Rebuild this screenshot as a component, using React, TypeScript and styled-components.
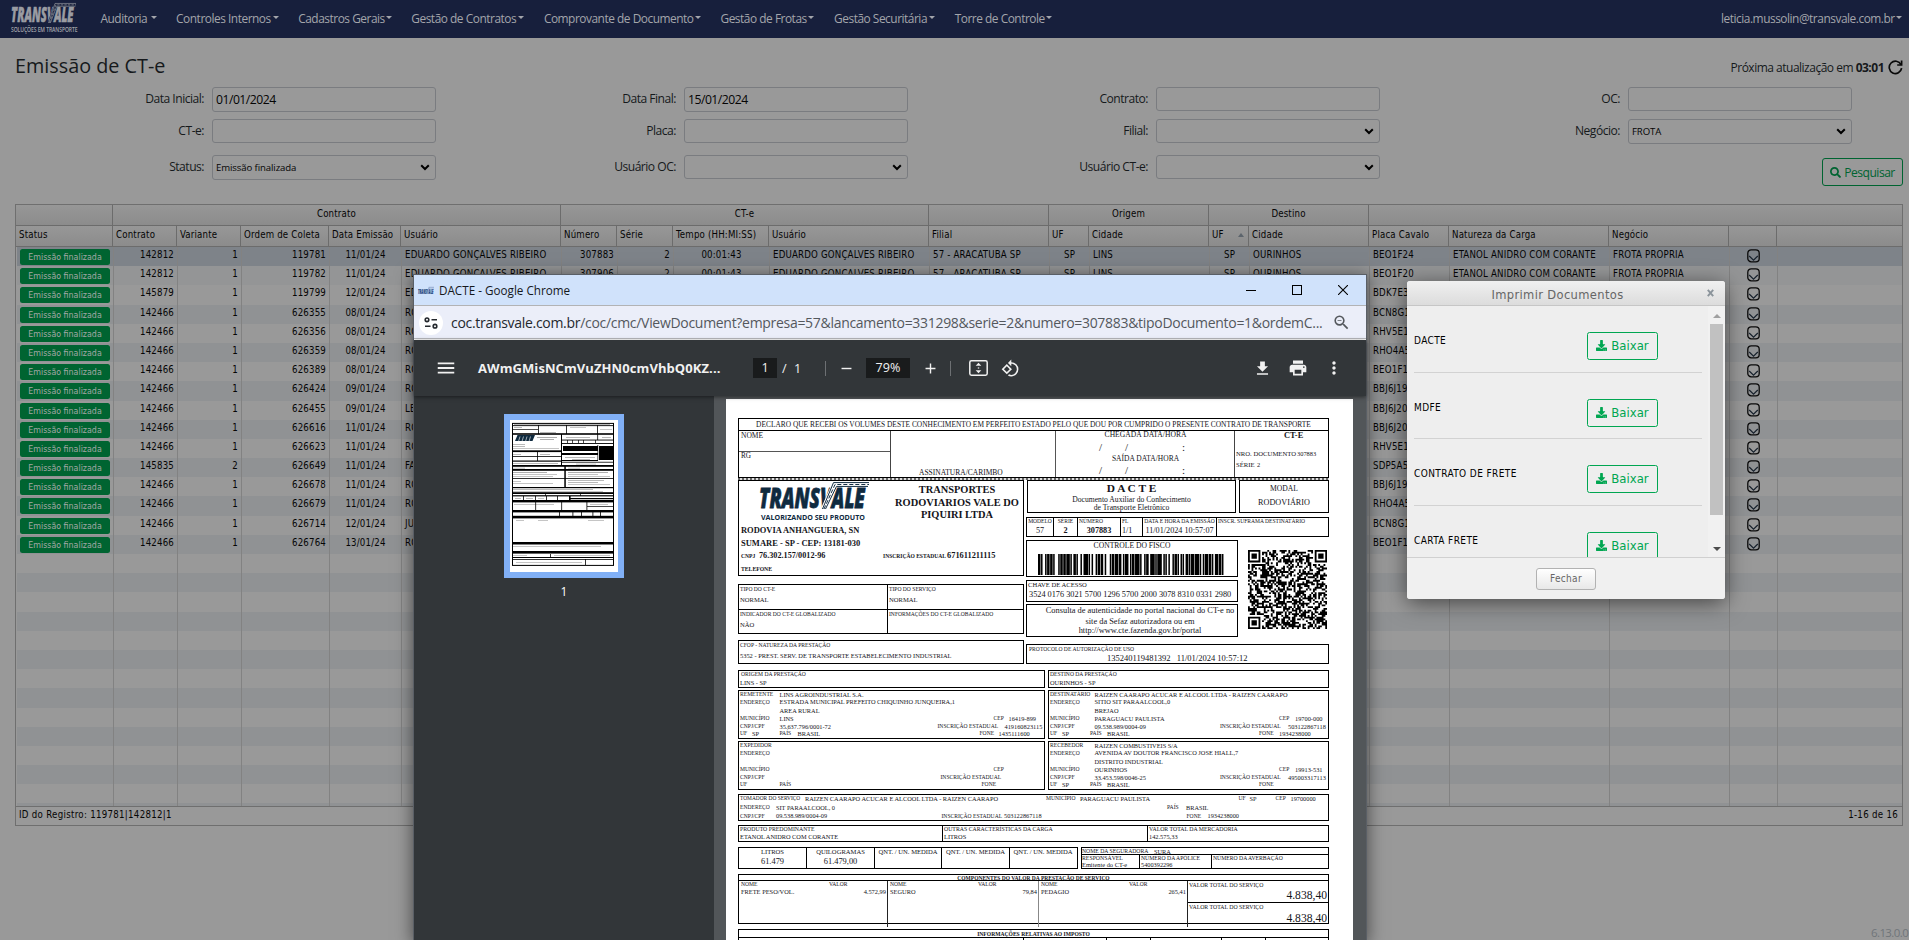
import React from 'react';
import styled, { createGlobalStyle, css } from 'styled-components';
import { FaDownload, FaSearch } from 'react-icons/fa';
import { MdRotate90DegreesCcw, MdFileDownload, MdPrint, MdMoreVert, MdMenu, MdAdd, MdRemove, MdZoomOut } from 'react-icons/md';

const UI = "'Open Sans', 'Noto Sans', sans-serif";
const GRID = "'DejaVu Sans Condensed', 'DejaVu Sans', sans-serif";
const SERIF = "'Liberation Serif', serif";

const GlobalStyle = createGlobalStyle`
  * { box-sizing: border-box; }
  html, body { margin: 0; padding: 0; background: #999; overflow: hidden; }
`;

const Page = styled.div`
  position: relative;
  width: 1909px;
  height: 940px;
  overflow: hidden;
  background: #999;
  color: #16191c;
  font-family: ${UI};
`;

/* ---------- navigation ---------- */

const Navbar = styled.header`
  display: flex;
  align-items: center;
  height: 38px;
  padding: 0 7px 0 11px;
  background: #171f3c;
  color: #a3a5ab;
`;

const NavLink = styled.a<{ $w: number }>`
  display: flex;
  align-items: center;
  justify-content: space-between;
  flex: 0 0 ${(p) => p.$w}px;
  margin-right: 19.6px;
  height: 38px;
  padding-bottom: 3px;
  font-size: 11.9px;
  letter-spacing: -0.47px;
  white-space: nowrap;
  &:last-child { margin: 0 0 0 auto; }
`;

const Caret = styled.i`
  width: 0;
  border: 3px solid transparent;
  border-top-color: currentColor;
  border-bottom: 0;
`;

const LogoLink = styled.a`
  flex: 0 0 89.5px;
  width: 89.5px;
  min-width: 0;
  height: 32px;
`;

const Artwork = styled.svg`
  display: block;
  overflow: visible;
`;

const navItems: [string, number][] = [
  ['Auditoria', 56], ['Controles Internos', 102.5], ['Cadastros Gerais', 93.5], ['Gestão de Contratos', 113],
  ['Comprovante de Documento', 157], ['Gestão de Frotas', 94], ['Gestão Securitária', 101], ['Torre de Controle', 97],
];

function Logo({ color, road, width, height }: { color: string; road: string; width: number; height: number }) {
  return (
    <Artwork width={width} height={height} viewBox="0 0 110 28" preserveAspectRatio="none">
      <text x="0" y="27" fontFamily="'Open Sans', sans-serif" fontStyle="italic" fontWeight="800" fontSize="30" fill={color}
        stroke={color} strokeWidth="0.8" textLength="106" lengthAdjust="spacingAndGlyphs">TRANSVALE</text>
      <path d="M65 28 L76 2 H110" fill="none" stroke={road} strokeWidth="6" />
      <path d="M66.5 28 L77.5 4.6 H109 M63.5 28 L74.5 0.6 H110" fill="none" stroke={color} strokeWidth="1" />
      <path d="M65 28 L76 2.6 H110" fill="none" stroke={color} strokeWidth="1" strokeDasharray="4 2" />
    </Artwork>
  );
}

const NavLogoCaption = styled.div`
  width: 89px;
  transform: scaleX(0.69);
  transform-origin: left;
  margin-top: 1px;
  font: 600 7.3px/10px ${UI};
  letter-spacing: -0.1px;
  white-space: nowrap;
`;

/* ---------- heading and filters ---------- */

const Heading = styled.div`
  display: flex;
  justify-content: space-between;
  height: 49px;
  padding: 12px 6px 0 15px;
`;

const Title = styled.h1`
  margin: 0;
  font: 500 19.8px/32px ${UI};
  letter-spacing: 0;
`;

const NextUpdate = styled.div`
  display: flex;
  align-items: center;
  gap: 4px;
  height: 35px;
  font-size: 12px;
  letter-spacing: -0.5px;
  b { font-weight: 700; }
`;

const Filters = styled.form`
  display: grid;
  grid-template-columns: repeat(4, 472px);
  grid-template-rows: 24px 24px 24px;
  row-gap: 8px;
  padding-left: 15px;
  height: 117px;
`;

const Field = styled.label<{ $drop?: boolean }>`
  display: grid;
  grid-template-columns: 189px 224px;
  column-gap: 8px;
  margin-top: ${(p) => (p.$drop ? 4 : 0)}px;
  height: 24px;
  line-height: 23px;
  font-size: 12.1px;
  letter-spacing: -0.5px;
  text-align: right;
`;

const Control = styled.span<{ $small?: boolean }>`
  display: flex;
  align-items: center;
  justify-content: space-between;
  padding: 0 5px 0 3px;
  border: 1px solid #7a7c80;
  border-radius: 3px;
  color: #050505;
  font-size: ${(p) => (p.$small ? 9.6 : 12.2)}px;
  letter-spacing: ${(p) => (p.$small ? -0.1 : -0.5)}px;
`;

const SearchBar = styled.div`
  display: flex;
  justify-content: flex-end;
  height: 0;
  padding-right: 6px;
`;

const SearchButton = styled.button`
  display: flex;
  align-items: center;
  justify-content: center;
  gap: 3px;
  width: 81px;
  height: 28px;
  margin-top: -46px;
  padding: 0;
  border: 1px solid #006431;
  border-radius: 3px;
  background: none;
  color: #006431;
  font: 12.1px ${UI};
  letter-spacing: -0.5px;
`;

const Chevron = () => (
  <svg width="10" height="7" viewBox="0 0 10 7"><path d="M1.2 1.2 L5 5 L8.8 1.2" fill="none" stroke="#000" strokeWidth="2" /></svg>
);

type FilterDef = { label: string; value?: string; select?: boolean };
const filters: FilterDef[] = [
  { label: 'Data Inicial:', value: '01/01/2024' }, { label: 'Data Final:', value: '15/01/2024' }, { label: 'Contrato:' }, { label: 'OC:' },
  { label: 'CT-e:' }, { label: 'Placa:' }, { label: 'Filial:', select: true }, { label: 'Negócio:', value: 'FROTA', select: true },
  { label: 'Status:', value: 'Emissão finalizada', select: true }, { label: 'Usuário OC:', select: true }, { label: 'Usuário CT-e:', select: true },
];

/* ---------- results grid ---------- */

const COLS = '97px 64px 64px 88px 72px 160px 56px 56px 96px 160px 120px 40px 120px 40px 120px 80px 160px 120px 48px 1fr';

const Table = styled.section`
  width: 1888px;
  height: 622px;
  margin-left: 15px;
  border: 1px solid #6f6f6f;
  font-family: ${GRID};
  font-stretch: condensed;
  font-size: 9.6px;
  letter-spacing: 0.18px;
  color: #050505;
  display: flex;
  flex-direction: column;
`;

const HeadRow = styled.div`
  display: grid;
  grid-template-columns: ${COLS};
  flex: 0 0 21px;
  background: linear-gradient(#979797, #8b8b8b);
`;

const GroupCell = styled.div<{ $span: number }>`
  grid-column: span ${(p) => p.$span};
  border-right: 1px solid #6c6c6c;
  border-bottom: 1px solid #6c6c6c;
  text-align: center;
  line-height: 18px;
  &:last-child { border-right: 0; }
`;

const HeadCell = styled.div`
  display: flex;
  justify-content: space-between;
  align-items: center;
  padding: 0 4px 3px 3px;
  border-right: 1px solid #6c6c6c;
  border-bottom: 1px solid #6c6c6c;
  white-space: nowrap;
  &:last-child { border-right: 0; }
`;

const SortArrow = styled.i`
  border: 3px solid transparent;
  border-bottom: 4px solid #5c646c;
  border-top: 0;
`;

const Body = styled.div`
  flex: 1;
  overflow: hidden;
  margin-left: 1px;
`;

const BodyRow = styled.div<{ $tone: string }>`
  display: grid;
  grid-template-columns: ${COLS};
  height: 19.2px;
  background: ${(p) => p.$tone};
`;

const BodyCell = styled.div<{ $align?: string }>`
  padding: 0 3px 0 3px;
  border-right: 1px solid #828282;
  line-height: 16.6px;
  text-align: ${(p) => p.$align || 'left'};
  white-space: nowrap;
  overflow: hidden;
  &:last-child { border-right: 0; }
`;

const Badge = styled.span`
  display: block;
  width: 90px;
  height: 16px;
  margin-top: 2px;
  border-radius: 2.5px;
  background: #006431;
  color: #a3a8a5;
  font: 500 8.8px/16px ${GRID};
  font-stretch: condensed;
  text-align: center;
  letter-spacing: 0;
`;

const ExpandMark = styled.svg`
  display: block;
  margin: 2px 0 0 14px;
`;

const TableFoot = styled.div`
  display: flex;
  justify-content: space-between;
  flex: 0 0 19px;
  padding: 0 4px 0 3px;
  border-top: 1px solid #6f6f6f;
  line-height: 16px;
  letter-spacing: 0.3px;
`;

const Version = styled.div`
  position: absolute;
  left: 1871px;
  bottom: 0;
  font-size: 11.5px;
  line-height: 14px;
  letter-spacing: -0.6px;
  white-space: nowrap;
  color: #70757a;
`;

const groups: [string, number][] = [['', 1], ['Contrato', 5], ['CT-e', 4], ['', 1], ['Origem', 2], ['Destino', 2], ['', 5]];
const heads = ['Status', 'Contrato', 'Variante', 'Ordem de Coleta', 'Data Emissão', 'Usuário', 'Número', 'Série', 'Tempo (HH:MI:SS)', 'Usuário',
  'Filial', 'UF', 'Cidade', 'UF', 'Cidade', 'Placa Cavalo', 'Natureza da Carga', 'Negócio', '', ''];
const aligns = ['left', 'right', 'right', 'right', 'center', 'left', 'right', 'right', 'center', 'left', 'left', 'center', 'left', 'center', 'left', 'left', 'left', 'left', 'center', 'left'];

const rest = (n: string, t: string, placa: string) =>
  [n, '2', t, 'EDUARDO GONÇALVES RIBEIRO', '57 - ARACATUBA SP', 'SP', 'LINS', 'SP', 'OURINHOS', placa, 'ETANOL ANIDRO COM CORANTE', 'FROTA PROPRIA'];
const short = (placa: string) => ['', '', '', '', '', '', '', '', '', placa, '', ''];

const records: string[][] = [
  ['142812', '1', '119781', '11/01/24', 'EDUARDO GONÇALVES RIBEIRO', ...rest('307883', '00:01:43', 'BEO1F24')],
  ['142812', '1', '119782', '11/01/24', 'EDUARDO GONÇALVES RIBEIRO', ...rest('307906', '00:01:43', 'BEO1F20')],
  ['145879', '1', '119799', '12/01/24', 'ED', ...short('BDK7E3')],
  ['142466', '1', '626355', '08/01/24', 'RO', ...short('BCN8G1')],
  ['142466', '1', '626356', '08/01/24', 'RO', ...short('RHV5E1')],
  ['142466', '1', '626359', '08/01/24', 'RO', ...short('RHO4A5')],
  ['142466', '1', '626389', '08/01/24', 'RO', ...short('BEO1F1')],
  ['142466', '1', '626424', '09/01/24', 'RO', ...short('BBJ6J19')],
  ['142466', '1', '626455', '09/01/24', 'LE', ...short('BBJ6J20')],
  ['142466', '1', '626616', '11/01/24', 'RO', ...short('BBJ6J20')],
  ['142466', '1', '626623', '11/01/24', 'RO', ...short('RHV5E1')],
  ['145835', '2', '626649', '11/01/24', 'FA', ...short('SDP5A5')],
  ['142466', '1', '626678', '11/01/24', 'RO', ...short('BBJ6J19')],
  ['142466', '1', '626679', '11/01/24', 'RO', ...short('RHO4A5')],
  ['142466', '1', '626714', '12/01/24', 'JU', ...short('BCN8G1')],
  ['142466', '1', '626764', '13/01/24', 'RO', ...short('BEO1F1')],
];

const ExpandIcon = () => (
  <ExpandMark width="13" height="14" viewBox="0 0 13 14">
    <rect x="0.8" y="0.8" width="11.4" height="12" rx="3.4" fill="none" stroke="#0a0a0a" strokeWidth="1.3" />
    <path d="M2.2 7 L6.5 11.2 L10.8 7" fill="none" stroke="#16202c" strokeWidth="1.1" />
  </ExpandMark>
);

const toneFor = (i: number) => (i === 0 ? '#7e8389' : i === 1 ? '#949596' : i % 2 ? '#909294' : '#999');

function ResultsTable() {
  return (
    <Table>
      <HeadRow>{groups.map(([g, n], i) => <GroupCell key={i} $span={n}>{g}</GroupCell>)}</HeadRow>
      <HeadRow>{heads.map((h, i) => <HeadCell key={i}>{h}{i === 13 && <SortArrow />}</HeadCell>)}</HeadRow>
      <Body>
        {Array.from({ length: 30 }, (_, i) => (
          <BodyRow key={i} $tone={toneFor(i)}>
            {aligns.map((a, c) => (
              <BodyCell key={c} $align={a}>
                {c === 0 && i < 16 && <Badge>Emissão finalizada</Badge>}
                {c > 0 && c < 18 && i < 16 && records[i][c - 1]}
                {c === 18 && i < 16 && <ExpandIcon />}
              </BodyCell>
            ))}
          </BodyRow>
        ))}
      </Body>
      <TableFoot><span>ID do Registro: 119781|142812|1</span><span>1-16 de 16</span></TableFoot>
    </Table>
  );
}

/* ---------- browser popup ---------- */

const Popup = styled.div`
  position: absolute;
  left: 414px;
  top: 275px;
  width: 952px;
  height: 665px;
  background: #525659;
  box-shadow: 0 0 0 1px #5a5f66, 0 3px 16px 2px rgba(0, 0, 0, 0.5);
  display: flex;
  flex-direction: column;
`;

const TitleBar = styled.div`
  display: flex;
  align-items: center;
  flex: 0 0 31px;
  padding-left: 4px;
  border-bottom: 1px solid #b2b3b5;
  background: #d0e2fb;
  color: #15181c;
  font-size: 11.7px;
  > span { margin-left: 5px; flex: 1; }
`;

const WindowButtons = styled.div`
  display: flex;
  gap: 36px;
  padding-right: 18px;
`;

const UrlBar = styled.div`
  display: flex;
  align-items: center;
  flex: 0 0 34px;
  padding: 0 15px 0 5px;
  border-bottom: 1px solid #fff;
  box-shadow: inset 0 -1px 0 #b7b8bd;
  background: #ebeef9;
  color: #54585d;
  font-size: 14px;
  > i, > svg { flex: none; }
  > span { flex: 0 0 880px; margin-left: 8px; letter-spacing: -0.3px; white-space: nowrap; }
  b { font-weight: 400; color: #24282d; }
  > svg { margin-left: 1px; }
`;

const SiteInfo = styled.i`
  display: flex;
  align-items: center;
  justify-content: center;
  width: 24px;
  height: 24px;
  border-radius: 50%;
  background: #fff;
`;

const PdfBar = styled.div`
  position: relative;
  display: flex;
  align-items: center;
  flex: 0 0 56px;
  padding-left: 21px;
  background: #323639;
  color: #f1f1f1;
  font-size: 12.6px;
  box-shadow: 0 1px 4px rgba(0, 0, 0, 0.5);
  svg { flex: none; }
`;

const FileName = styled.strong`
  flex: 0 0 275px;
  margin-left: 21px;
  font-size: 13px;
  font-weight: 700;
  letter-spacing: 0.08px;
`;

const DarkBox = styled.span<{ $w: number; $l?: number; $r?: number }>`
  width: ${(p) => p.$w}px;
  height: 20px;
  margin-left: ${(p) => p.$l || 0}px;
  margin-right: ${(p) => p.$r || 0}px;
  line-height: 20px;
  background: #191b1c;
  text-align: center;
`;

const Divider = styled.i<{ $l: number; $r: number }>`
  width: 1px;
  height: 15px;
  margin: 0 ${(p) => p.$r}px 0 ${(p) => p.$l}px;
  background: #6d7073;
`;

const PageCount = styled.span`
  width: 48px;
  padding-left: 5px;
  word-spacing: 4px;
`;

const PdfTools = styled.div`
  display: flex;
  align-items: center;
  margin-left: auto;
  padding-right: 22px;
  gap: 16px;
`;

const RotateSlot = styled.span`
  display: flex;
  margin-left: 13px;
`;

const Viewer = styled.div`
  display: flex;
  flex: 1;
  min-height: 0;
`;

const Thumbs = styled.aside`
  display: flex;
  flex-direction: column;
  align-items: center;
  flex: 0 0 300px;
  padding-top: 18px;
  background: #323639;
  color: #fff;
  font-size: 12px;
`;

const ThumbFrame = styled.div`
  width: 120px;
  height: 164px;
  margin-bottom: 5px;
  border: 6px solid #81b0f6;
  background: #fff;
`;

/* rectangles as x, y, width, height */
const thumbInk: number[][] = [
  [2, 5.2, 102, 0.9], [2, 9.3, 26, 0.7], [28, 5, 0.8, 9], [56, 5, 0.8, 9], [87, 5, 0.8, 9], [2, 13.2, 102, 1.6],
  [51, 14, 1, 31], [52, 19.6, 52, 0.9], [52, 23, 52, 0.9], [87.3, 14, 0.8, 6], [57, 20, 0.7, 3], [62, 20, 0.7, 3], [68, 20, 0.7, 3], [73, 20, 0.7, 3], [85, 20, 0.7, 3],
  [53, 26, 35, 5], [89, 26, 15, 14], [2, 30.3, 49, 1.8], [52, 33, 36, 2], [52, 40, 36, 1], [87.5, 25, 0.7, 15], [27, 32, 0.8, 9], [2, 36, 49, 0.8], [2, 40.5, 50, 1.2],
  [52, 41.8, 52, 0.8], [2, 45, 102, 1.8], [2, 49, 102, 1.8], [54.3, 46, 1.5, 21], [2, 58, 102, 0.8], [2, 67, 102, 1.2], [2, 72.2, 102, 1.8], [35, 74, 0.7, 2],
  [70, 74, 0.7, 2], [2, 75.2, 102, 1.2], [13, 76, 0.8, 5], [25, 76, 0.8, 5], [36, 76, 0.8, 5], [47, 76, 0.8, 5], [59, 76, 1.6, 5], [60, 78, 44, 1.2],
  [2, 80, 102, 2.4], [25.3, 82, 0.8, 8], [51.3, 82, 0.8, 8], [76.5, 82, 0.8, 8], [77, 86.2, 27, 0.7], [2, 90, 102, 2.4], [49, 92, 0.8, 5], [62.5, 92, 0.8, 5], [71, 92, 0.8, 5],
  [82.5, 92, 0.8, 5], [90, 92, 0.8, 5], [2, 95.8, 102, 2.6], [2, 122, 102, 2.5], [2, 131, 102, 2.6], [40, 134, 0.8, 4], [2, 137, 102, 1], [2, 139, 102, 0.8], [75.2, 139, 0.8, 6],
];
const thumbGrey: number[][] = [
  [4, 4, 96, 0.6], [4, 7, 8, 0.6], [60, 7, 16, 0.5], [90, 9, 12, 0.5], [30, 12, 16, 0.6], [27, 17, 20, 0.7], [30, 19, 14, 0.7], [56, 17, 24, 0.6], [92, 17, 9, 0.6],
  [3, 24, 12, 0.6], [3, 26, 12, 0.6], [3, 28, 46, 0.5], [3, 34, 8, 0.6], [30, 34, 10, 0.6], [55, 37, 30, 0.6], [62, 39, 18, 0.6], [3, 43.4, 45, 0.6], [66, 43.8, 20, 0.5],
  [3, 47.8, 12, 0.6], [58, 47.8, 12, 0.6], [3, 52, 34, 0.7], [3, 54, 44, 0.5], [3, 56, 40, 0.5], [58, 52, 40, 0.7], [58, 54, 30, 0.5], [58, 56, 42, 0.5], [3, 61, 8, 0.5],
  [3, 63, 40, 0.5], [58, 60, 36, 0.6], [58, 62, 30, 0.6], [58, 64.5, 42, 0.5], [3, 69, 80, 0.6], [3, 71, 90, 0.5], [5, 78, 6, 0.6], [16, 78, 7, 0.6], [28, 78, 6, 0.5],
  [4, 84, 40, 0.5], [80, 84, 18, 0.5], [6, 100, 8, 0.5], [28, 100, 10, 0.5], [78, 100, 16, 0.5], [3, 126, 88, 0.5], [3, 135.5, 14, 0.5], [44, 135.5, 56, 0.5], [6, 142, 66, 0.5],
];

function Thumbnail() {
  return (
    <Artwork width="108" height="152" viewBox="0 0 108 152">
      <rect x="2.5" y="3.4" width="101" height="142" fill="none" stroke="#000" />
      {thumbGrey.map(([x, y, w, h], i) => <rect key={i} x={x} y={y} width={w} height={h} fill="#8a8a8a" />)}
      {thumbInk.map(([x, y, w, h], i) => <rect key={i} x={x} y={y} width={w} height={h} />)}
      <path d="M5 21L7.5 15H25L22.5 21Z" fill="#0f2a3f" />
      <path d="M8.5 21.5L10 16.5M12 21.5L13.5 16.5M15.5 21.5L17 16.5M19 21.5L20.5 16.5" stroke="#fff" strokeWidth="0.6" />
    </Artwork>
  );
}

/* ---------- DACTE document ---------- */

const Sheet = styled.article`
  width: 627px;
  margin-left: 12px;
  margin-top: 3px;
  padding: 19px 24px 0 12px;
  overflow: hidden;
  background: #fff;
  color: #14141a;
  font-family: ${SERIF};
`;

const Box = styled.div<{ $h: number; $w?: number; $mt?: number; $ml?: number; $dir?: string }>`
  display: flex;
  flex-direction: ${(p) => p.$dir || 'column'};
  flex: none;
  ${(p) => p.$w && css`width: ${p.$w}px;`}
  height: ${(p) => p.$h}px;
  margin-top: ${(p) => p.$mt || 0}px;
  margin-left: ${(p) => p.$ml || 0}px;
  border: 1px solid #000;
`;

const Strip = styled.div`
  display: flex;
  align-items: flex-start;
`;

const FillStrip = styled.div`
  display: flex;
  flex: 1;
  align-items: stretch;
`;

const HalfStrip = styled.div`
  display: flex;
  height: 24px;
  & + & { border-top: 1px solid #000; }
`;

const Stack = styled.div<{ $w: number; $ml?: number }>`
  flex: 0 0 ${(p) => p.$w}px;
  width: ${(p) => p.$w}px;
  margin-left: ${(p) => p.$ml || 0}px;
`;

const Cell = styled.div<{ $w?: number; $line?: string; $pt?: number }>`
  display: flex;
  flex-direction: column;
  flex: ${(p) => (p.$w ? `0 0 ${p.$w}px` : '1')};
  min-width: 0;
  padding-top: ${(p) => p.$pt || 0}px;
  border-right: 1px solid ${(p) => p.$line || '#000'};
  &:last-child { border-right: 0; }
`;

const ReceiptStrip = styled(Strip)`
  height: 46px;
  align-items: stretch;
`;

const Line = styled.div<{ $h: number; $pl?: number; $rule?: string }>`
  display: flex;
  flex: 0 0 ${(p) => p.$h}px;
  height: ${(p) => p.$h}px;
  line-height: ${(p) => p.$h}px;
  padding-left: ${(p) => p.$pl || 0}px;
  ${(p) => p.$rule && css`border-bottom: 1px solid ${p.$rule};`}
`;

const Slot = styled.span<{ $w?: number; $s: number; $b?: boolean; $a?: string }>`
  flex: ${(p) => (p.$w ? `0 0 ${p.$w}px` : '1 0 0')};
  font-size: ${(p) => p.$s}px;
  font-weight: ${(p) => (p.$b ? 700 : 400)};
  text-align: ${(p) => p.$a || 'left'};
  white-space: pre;
`;

const Perforation = styled.div`
  width: 591px;
  height: 2px;
  background: repeating-linear-gradient(90deg, #666 0 2px, #ddd 2px 4px);
`;

const LogoArea = styled.div`
  padding: 1px 0 0 20px;
`;

const Caption = styled.div`
  margin: 4px 0 0 22px;
  height: 9px;
  font: 700 7.1px/9px ${UI};
  color: #0f2a3f;
  white-space: nowrap;
`;

type Item = [text: string, width: number, size: number, bold?: boolean, align?: string];
const Items = ({ h, pl = 0, of, rule }: { h: number; pl?: number; of: Item[]; rule?: string }) => (
  <Line $h={h} $pl={pl} $rule={rule}>
    {of.map(([t, w, s, b, a], i) => <Slot key={i} $w={w} $s={s} $b={b} $a={a}>{t}</Slot>)}
  </Line>
);

const BarcodeArt = styled.svg`
  display: block;
  flex: none;
  margin: 3px 0 0 11px;
`;

const QrArt = styled.svg`
  display: block;
  flex: none;
  margin: 13px 0 0 10px;
`;

const bars = '2113112121141121213112211312411213112122141121312211321121411311224111421112131121121112211131411211312112312114';

const Barcode = () => {
  let x = 0;
  const total = bars.split('').reduce((s, c) => s + Number(c), 0);
  return (
    <BarcodeArt width="189" height="21" viewBox={`0 0 ${total} 21`} preserveAspectRatio="none">
      {bars.split('').map((c, i) => {
        const w = Number(c);
        const r = i % 2 === 0 ? <rect key={i} x={x} width={w + 0.5} height="21" /> : null;
        x += w;
        return r;
      })}
    </BarcodeArt>
  );
};

const N = 45;
const inFinder = (x: number, y: number) => {
  const fx = x < 8 ? x : x >= N - 8 ? N - 1 - x : -1;
  const fy = y < 8 ? y : y >= N - 8 ? N - 1 - y : -1;
  if (fx < 0 || fy < 0 || (x >= N - 8 && y >= N - 8)) return null;
  if (fx === 7 || fy === 7) return false;
  const d = Math.max(Math.abs(fx - 3), Math.abs(fy - 3));
  return d === 3 || d <= 1;
};
const QrCode = () => {
  let seed = 20240111;
  let d = '';
  for (let y = 0; y < N; y++) {
    for (let x = 0; x < N; x++) {
      seed = (seed * 1103515245 + 12345) % 2147483648;
      const f = inFinder(x, y);
      if (f === null ? (seed >> 12) % 100 < 54 : f) d += `M${x} ${y}h1.05v1.05h-1.05z`;
    }
  }
  return <QrArt width="79" height="79" viewBox="0 0 45 45"><path d={d} /></QrArt>;
};

type Party = {
  role: string; name: string; addr: string; area: string; city: string; cep: string; doc: string; ie: string; uf: string; country: string; phone: string;
};
/* columns: value, cep label/value, inscription label/value, phone label/value, uf value, country label/value */
const leftCols = [39.5, 253.5, 268.5, 197.5, 264.5, 239.5, 258.5, 12, 39.5, 57.5];
const rightCols = [44.5, 229, 245, 170, 238, 209, 229, 12, 40, 57];
const blankCols = [39.5, 253.5, 268.5, 200.5, 264.5, 241.5, 258.5, 12, 39.5, 57.5];

function PartyBox({ p, c, w, ml, h, mt }: { p: Party; c: number[]; w: number; ml?: number; h: number; mt: number }) {
  const L = 5.6;
  const V = 6.35;
  return (
    <Box $w={w} $h={h} $ml={ml} $mt={mt}>
      <Items h={7.4} pl={1} of={[[p.role, c[0], L], [p.name, 100, V]]} />
      <Items h={8.8} pl={1} of={[['ENDEREÇO', c[0], L], [p.addr, 100, V]]} />
      <Items h={7.6} pl={1} of={[['', c[0], L], [p.area, 100, V]]} />
      <Items h={7.9} pl={1} of={[['MUNICÍPIO', c[0], L], [p.city, c[1] - c[0], V], ['CEP', c[2] - c[1], L], [p.cep, 30, V]]} />
      <Items h={7.8} pl={1} of={[['CNPJ/CPF', c[0], L], [p.doc, c[3] - c[0], V], ['INSCRIÇÃO ESTADUAL', c[4] - c[3], L], [p.ie, 30, V]]} />
      <Items h={7.6} pl={1} of={[['UF', c[7], L], [p.uf, c[8] - c[7], V], ['PAÍS', c[9] - c[8], L], [p.country, c[5] - c[9], V], ['FONE', c[6] - c[5], L], [p.phone, 30, V]]} />
    </Box>
  );
}

const remetente: Party = { role: 'REMETENTE', name: 'LINS AGROINDUSTRIAL S.A.', addr: 'ESTRADA MUNICIPAL PREFEITO CHIQUINHO JUNQUEIRA,1', area: 'AREA RURAL', city: 'LINS', cep: '16419-899', doc: '35.637.796/0001-72', ie: '419160823115', uf: 'SP', country: 'BRASIL', phone: '1435111600' };
const destinatario: Party = { role: 'DESTINATÁRIO', name: 'RAIZEN CAARAPO ACUCAR E ALCOOL LTDA - RAIZEN CAARAPO', addr: 'SITIO SIT PARAALCOOL,0', area: 'BREJAO', city: 'PARAGUACU PAULISTA', cep: '19700-000', doc: '09.538.989/0004-09', ie: '503122867118', uf: 'SP', country: 'BRASIL', phone: '1934238000' };
const expedidor: Party = { role: 'EXPEDIDOR', name: '', addr: '', area: '', city: '', cep: '', doc: '', ie: '', uf: '', country: '', phone: '' };
const recebedor: Party = { role: 'RECEBEDOR', name: 'RAIZEN COMBUSTIVEIS S/A', addr: 'AVENIDA AV DOUTOR FRANCISCO JOSE HIALL,7', area: 'DISTRITO INDUSTRIAL', city: 'OURINHOS', cep: '19913-531', doc: '33.453.598/0046-25', ie: '495003317113', uf: 'SP', country: 'BRASIL', phone: '' };

function Dacte() {
  return (
    <Sheet>
      <Box $h={60} $w={591}>
        <Items h={12} rule="#000" of={[['DECLARO QUE RECEBI OS VOLUMES DESTE CONHECIMENTO EM PERFEITO ESTADO PELO QUE DOU POR CUMPRIDO O PRESENTE CONTRATO DE TRANSPORTE', 589, 7.42, false, 'center']]} />
        <ReceiptStrip>
          <Cell $w={152} $line="#444">
            <Items h={10} pl={2} of={[['NOME', 60, 7.5]]} />
            <Line $h={11} $rule="#555" />
            <Items h={8} pl={2} of={[['RG', 60, 7.2]]} />
          </Cell>
          <Cell $w={165} $line="#555" $pt={38}>
            <Items h={8} pl={28} of={[['ASSINATURA/CARIMBO', 100, 7.5]]} />
          </Cell>
          <Cell $w={179} $line="#444">
            <Items h={8.5} of={[['CHEGADA DATA/HORA', 179, 7.6, false, 'center']]} />
            <Items h={14} pl={43} of={[['/', 26, 11], ['/', 57, 11], [':', 10, 11]]} />
            <Items h={9} of={[['SAÍDA DATA/HORA', 179, 7.5, false, 'center']]} />
            <Items h={14} pl={43} of={[['/', 26, 11], ['/', 57, 11], [':', 10, 11]]} />
          </Cell>
          <Cell>
            <Items h={9} pl={49} of={[['CT-E', 40, 8.4, true]]} />
            <Line $h={9} />
            <Items h={9} pl={1} of={[['NRO. DOCUMENTO', 61, 6.7], ['307883', 30, 6.4]]} />
            <Items h={13} pl={1} of={[['SÉRIE', 21, 6.7], ['2', 30, 6.4]]} />
          </Cell>
        </ReceiptStrip>
      </Box>
      <Perforation />
      <Strip>
        <Stack $w={286}>
          <Box $h={96} $w={286}>
            <Strip>
              <Stack $w={148}>
                <LogoArea><Logo width={110} height={27} color="#0f2a3f" road="#fff" /></LogoArea>
                <Caption>VALORIZANDO SEU PRODUTO</Caption>
                <Line $h={2} />
              </Stack>
              <Stack $w={136}>
                <Items h={17} of={[['TRANSPORTES', 140, 10.4, true, 'center']]} />
                <Items h={10.5} of={[['RODOVIARIOS VALE DO', 140, 10.4, true, 'center']]} />
                <Items h={12} of={[['PIQUIRI LTDA', 140, 10.4, true, 'center']]} />
              </Stack>
            </Strip>
            <Items h={13} pl={2} of={[['RODOVIA ANHANGUERA, SN', 200, 8.45, true]]} />
            <Items h={13} pl={2} of={[['SUMARE - SP - CEP: 13181-030', 200, 8.5, true]]} />
            <Items h={12.5} pl={2} of={[['CNPJ', 18, 5.6, true], ['76.302.157/0012-96', 124, 8.2, true], ['INSCRIÇÃO ESTADUAL', 64, 5.55, true], ['671611211115', 60, 8.4, true]]} />
            <Items h={12.5} pl={2} of={[['TELEFONE', 60, 5.7, true]]} />
          </Box>
          <Box $h={50} $w={286} $mt={8}>
            {[['TIPO DO CT-E', 'TIPO DO SERVIÇO', 'NORMAL', 'NORMAL'], ['INDICADOR DO CT-E GLOBALIZADO', 'INFORMAÇÕES DO CT-E GLOBALIZADO', 'NÃO', '']].map((r) => (
              <HalfStrip key={r[0]}>
                {[0, 1].map((k) => (
                  <Cell key={k} $w={k ? undefined : 149}>
                    <Items h={8} pl={1} of={[[r[k], 100, 5.6]]} />
                    <Items h={14} pl={1} of={[[r[k + 2], 100, 6.6]]} />
                  </Cell>
                ))}
              </HalfStrip>
            ))}
          </Box>
          <Box $h={24} $w={286} $mt={6}>
            <Items h={8} pl={1} of={[['CFOP - NATUREZA DA PRESTAÇÃO', 200, 5.6]]} />
            <Items h={13} pl={1} of={[['5352 - PREST. SERV. DE TRANSPORTE ESTABELECIMENTO INDUSTRIAL', 280, 6.42]]} />
          </Box>
        </Stack>
        <Stack $w={305}>
          <Strip>
            <Box $h={33} $w={209} $ml={3}>
              <Items h={14} of={[['D A C T E', 207, 11.4, true, 'center']]} />
              <Items h={9} of={[['Documento Auxiliar do Conhecimento', 207, 7.65, false, 'center']]} />
              <Items h={8} of={[['de Transporte Eletrônico', 207, 7.65, false, 'center']]} />
            </Box>
            <Box $h={33} $w={90} $ml={3}>
              <Items h={15} of={[['MODAL', 88, 7.6, false, 'center']]} />
              <Items h={14} of={[['RODOVIÁRIO', 88, 8.2, false, 'center']]} />
            </Box>
          </Strip>
          <Box $h={20} $w={303} $ml={2} $mt={4} $dir="row">
            {([['MODELO', '57', 27, 'center', false], ['SÉRIE', '2', 24, 'center', true], ['NÚMERO', '307883', 43, 'center', true], ['FL', '1/1', 22, 'left', false],
              ['DATA E HORA DA EMISSÃO', '11/01/2024 10:57:07', 74, 'center', false], ['INSCR. SUFRAMA DESTINATÁRIO', '', 111, 'left', false]] as [string, string, number, string, boolean][]).map(([l, v, w, a, b], i) => (
              <Cell key={l} $w={w}>
                <Items h={7.5} pl={i >= 2 ? 1 : 0} of={[[l, i >= 2 ? w - 3 : w - 1, 5.55, false, i === 2 ? 'left' : a]]} />
                <Items h={10} pl={i === 3 ? 1 : 0} of={[[v, w - 1, 8.2, b, a]]} />
              </Cell>
            ))}
          </Box>
          <Strip>
            <Stack $w={212} $ml={2}>
              <Box $h={37} $w={212} $mt={3}>
                <Items h={10} of={[['CONTROLE DO FISCO', 210, 7.6, false, 'center']]} />
                <Barcode />
              </Box>
              <Box $h={22} $w={212} $mt={3}>
                <Items h={8} pl={1} of={[['CHAVE DE ACESSO', 100, 6.6]]} />
                <Items h={12} pl={2} of={[['3524 0176 3021 5700 1296 5700 2000 3078 8310 0331 2980', 207, 8.25]]} />
              </Box>
              <Box $h={33} $w={212} $mt={2}>
                <Items h={12.5} of={[['Consulta de autenticidade no portal nacional do CT-e no', 226, 8.4, false, 'center']]} />
                <Items h={8.5} of={[['site da Sefaz autorizadora ou em', 226, 8.4, false, 'center']]} />
                <Items h={10.5} of={[['http://www.cte.fazenda.gov.br/portal', 226, 8.4, false, 'center']]} />
              </Box>
            </Stack>
            <QrCode />
          </Strip>
          <Box $h={20} $w={303} $ml={2} $mt={7}>
            <Items h={8} pl={2} of={[['PROTOCOLO DE AUTORIZAÇÃO DE USO', 200, 5.6]]} />
            <Items h={10} pl={80} of={[['135240119481392   11/01/2024 10:57:12', 200, 8.5]]} />
          </Box>
        </Stack>
      </Strip>
      <Strip>
        <Box $h={18} $w={307} $mt={6}>
          <Items h={7} pl={2} of={[['ORIGEM DA PRESTAÇÃO', 100, 5.6]]} />
          <Items h={9} pl={1} of={[['LINS - SP', 100, 6.4]]} />
        </Box>
        <Box $h={18} $w={281} $mt={6} $ml={3}>
          <Items h={7} pl={1} of={[['DESTINO DA PRESTAÇÃO', 100, 5.6]]} />
          <Items h={9} pl={1} of={[['OURINHOS - SP', 100, 6.4]]} />
        </Box>
      </Strip>
      <Strip>
        <PartyBox p={remetente} c={leftCols} w={307} h={49} mt={2} />
        <PartyBox p={destinatario} c={rightCols} w={281} ml={3} h={49} mt={2} />
      </Strip>
      <Strip>
        <PartyBox p={expedidor} c={blankCols} w={307} h={49} mt={2} />
        <PartyBox p={recebedor} c={rightCols} w={281} ml={3} h={49} mt={2} />
      </Strip>
      <Box $h={27} $w={591} $mt={4}>
        <Items h={7.5} pl={1} of={[['TOMADOR DO SERVIÇO', 65, 5.4], ['RAIZEN CAARAPO ACUCAR E ALCOOL LTDA - RAIZEN CAARAPO', 241, 6.35], ['MUNICÍPIO', 34, 5.6], ['PARAGUACU PAULISTA', 158.5, 6.35], ['UF', 11, 5.6], ['SP', 26, 6.3], ['CEP', 15, 5.6], ['19700000', 30, 6.3]]} />
        <Items h={9} pl={1} of={[['ENDEREÇO', 36, 5.6], ['SIT PARAALCOOL, 0', 391, 6.3], ['PAÍS', 19, 5.6], ['BRASIL', 30, 6.3]]} />
        <Items h={8} pl={1} of={[['CNPJ/CPF', 36, 5.6], ['09.538.989/0004-09', 165.5, 6.3], ['INSCRIÇÃO ESTADUAL', 62.5, 5.6], ['503122867118', 182.5, 6.3], ['FONE', 21, 5.6], ['1934238000', 30, 6.3]]} />
      </Box>
      <Box $h={17} $w={591} $mt={4} $dir="row">
        {([['PRODUTO PREDOMINANTE', 'ETANOL ANIDRO COM CORANTE', 204], ['OUTRAS CARACTERÍSTICAS DA CARGA', 'LITROS', 205], ['VALOR TOTAL DA MERCADORIA', '142.575,33', 180]] as [string, string, number][]).map(([l, v, w]) => (
          <Cell key={l} $w={w}>
            <Items h={7} pl={1} of={[[l, 100, 5.8]]} />
            <Items h={8} pl={1} of={[[v, 100, 6.35]]} />
          </Cell>
        ))}
      </Box>
      <Strip>
        <Box $h={22} $w={340} $mt={5} $dir="row">
          {([['LITROS', '61.479', 68], ['QUILOGRAMAS', '61.479,00', 68], ['QNT. / UN. MEDIDA', '', 67], ['QNT. / UN. MEDIDA', '', 68], ['QNT. / UN. MEDIDA', '', 67]] as [string, string, number][]).map(([l, v, w], i) => (
            <Cell key={i} $w={w}>
              <Items h={7.5} of={[[l, w - 1, 6.6, false, 'center']]} />
              <Items h={12} of={[[v, w - 1, 8.4, false, 'center']]} />
            </Cell>
          ))}
        </Box>
        <Box $h={22} $w={248} $mt={5} $ml={3}>
          <Items h={7} rule="#000" of={[['NOME DA SEGURADORA', 72, 5.7], ['SURA', 60, 6.3]]} />
          <Strip>
            <Cell $w={58}><Items h={6.5} of={[['RESPONSÁVEL', 50, 5.8]]} /><Items h={6.5} of={[['Emitente do CT-e', 50, 6.4]]} /></Cell>
            <Cell $w={72}><Items h={6.5} pl={1} of={[['NÚMERO DA APÓLICE', 50, 5.7]]} /><Items h={6.5} pl={1} of={[['5400392296', 50, 6.3]]} /></Cell>
            <Cell $w={116}><Items h={6.5} pl={1} of={[['NÚMERO DA AVERBAÇÃO', 50, 5.7]]} /></Cell>
          </Strip>
        </Box>
      </Strip>
      <Box $h={50} $w={591} $mt={5}>
        <Items h={6} rule="#000" of={[['COMPONENTES DO VALOR DA PRESTAÇÃO DE SERVIÇO', 589, 5.5, true, 'center']]} />
        <FillStrip>
          {([['FRETE PESO/VOL.', '4.572,99', 149], ['SEGURO', '79,84', 151], ['PEDAGIO', '265,41', 149]] as [string, string, number][]).map(([l, v, w], i) => (
            <Cell key={l} $w={w} $line={i === 1 ? '#888' : '#222'}>
              <Items h={6} pl={2} of={[['NOME', 88, 5.6], ['VALOR', 30, 5.6]]} />
              <Items h={9} pl={2} of={[[l, 70, 6.4], [v, w - 74, 6.4, false, 'right']]} />
            </Cell>
          ))}
          <Cell>
            <Items h={8} pl={1} of={[['VALOR TOTAL DO SERVIÇO', 100, 5.8]]} />
            <Items h={14} rule="#000" of={[['4.838,40', 139, 11.6, false, 'right']]} />
            <Items h={8} pl={1} of={[['VALOR TOTAL DO SERVIÇO', 100, 5.8]]} />
            <Items h={16} of={[['4.838,40', 139, 11.6, false, 'right']]} />
          </Cell>
        </FillStrip>
      </Box>
      <Box $h={30} $w={591} $mt={5}>
        <Items h={8} rule="#000" of={[['INFORMAÇÕES RELATIVAS AO IMPOSTO', 589, 5.6, true, 'center']]} />
        <FillStrip>
          <Cell $w={285} /><Cell $w={83} /><Cell $w={44} /><Cell $w={71} /><Cell $w={44} /><Cell />
        </FillStrip>
      </Box>
    </Sheet>
  );
}

function PopupWindow() {
  return (
    <Popup>
      <TitleBar>
        <Logo width={16} height={7} color="#24467e" road="#d0e2fb" />
        <span>DACTE - Google Chrome</span>
        <WindowButtons>
          <svg width="10" height="10"><path d="M0 5.5H10" stroke="#000" /></svg>
          <svg width="10" height="10"><rect x="0.5" y="0.5" width="9" height="9" fill="none" stroke="#000" /></svg>
          <svg width="10" height="10"><path d="M0 0L10 10M10 0L0 10" stroke="#000" strokeWidth="1.1" /></svg>
        </WindowButtons>
      </TitleBar>
      <UrlBar>
        <SiteInfo>
          <svg width="14" height="12" viewBox="0 0 14 12" fill="none" stroke="#24282d" strokeWidth="1.6">
            <circle cx="3" cy="2.8" r="1.8" /><path d="M7.5 2.8H13M1 9.2H6.5" /><circle cx="11" cy="9.2" r="1.8" />
          </svg>
        </SiteInfo>
        <span><b>coc.transvale.com.br</b>/coc/cmc/ViewDocument?empresa=57&amp;lancamento=331298&amp;serie=2&amp;numero=307883&amp;tipoDocumento=1&amp;ordemC...</span>
        <MdZoomOut size={19} />
      </UrlBar>
      <PdfBar>
        <MdMenu size={22} />
        <FileName>AWmGMisNCmVuZHN0cmVhbQ0KZ...</FileName>
        <DarkBox $w={24}>1</DarkBox>
        <PageCount>/ 1</PageCount>
        <Divider $l={0} $r={12} />
        <MdRemove size={17} />
        <DarkBox $w={44} $l={11} $r={12}>79%</DarkBox>
        <MdAdd size={17} />
        <Divider $l={11} $r={18} />
        <svg width="19" height="16" viewBox="0 0 19 16" fill="none" stroke="#f1f1f1">
          <rect x="0.8" y="0.8" width="17.4" height="14.4" rx="1.6" strokeWidth="1.5" />
          <path d="M9.5 2.8l2.8 3h-5.6zM9.5 13.2l2.8-3h-5.6z" fill="#f1f1f1" stroke="none" /><path d="M8.8 8h1.4" strokeWidth="1.2" />
        </svg>
        <RotateSlot><MdRotate90DegreesCcw size={19} /></RotateSlot>
        <PdfTools><MdFileDownload size={19} /><MdPrint size={20} /><MdMoreVert size={20} /></PdfTools>
      </PdfBar>
      <Viewer>
        <Thumbs><ThumbFrame><Thumbnail /></ThumbFrame>1</Thumbs>
        <Dacte />
      </Viewer>
    </Popup>
  );
}

/* ---------- print dialog ---------- */

const Dialog = styled.div`
  position: absolute;
  left: 1407px;
  top: 281px;
  width: 318px;
  height: 318px;
  display: flex;
  flex-direction: column;
  border-radius: 3px;
  overflow: hidden;
  background: #eee;
  box-shadow: 0 4px 22px rgba(0, 0, 0, 0.55);
`;

const DialogHead = styled.div`
  display: flex;
  align-items: center;
  flex: 0 0 25px;
  padding-left: 1px;
  border-bottom: 1px solid #c6c6c6;
  background: linear-gradient(#f0f0f0, #dcdcdc);
  color: #666;
  font-family: ${GRID};
  font-stretch: condensed;
  font-size: 12.8px;
  letter-spacing: 0.35px;
  > span { flex: 1; text-align: center; padding-top: 2px; }
  > svg { margin-right: 11px; }
`;

const DialogBody = styled.div`
  display: flex;
  flex: 0 0 251px;
  overflow: hidden;
`;

const DocList = styled.div`
  flex: 0 0 301px;
  padding: 0 6px 0 7px;
`;

const DocRow = styled.div`
  display: flex;
  align-items: flex-start;
  height: 66.7px;
  padding-top: 26px;
  border-bottom: 1px solid #d2d2d2;
  color: #000;
  font: 10px/17px ${GRID};
  font-stretch: condensed;
  letter-spacing: 0.4px;
  > span { flex: 0 0 173px; }
`;

const DownloadButton = styled.button`
  display: flex;
  align-items: center;
  justify-content: center;
  gap: 4px;
  width: 71px;
  height: 28px;
  padding: 0 0 1px;
  border: 1px solid #00a651;
  border-radius: 2.5px;
  background: none;
  color: #00a651;
  font: 13px ${GRID};
  font-stretch: condensed;
`;

const ScrollTrack = styled.div`
  display: flex;
  flex-direction: column;
  align-items: center;
  justify-content: space-between;
  flex: 0 0 17px;
  padding: 8px 0 6px;
  background: #f1f1f1;
`;

const ScrollArrow = styled.i<{ $down?: boolean }>`
  border: 4px solid transparent;
  ${(p) => (p.$down ? css`border-top-color: #4c4c4c; border-bottom: 0;` : css`border-bottom-color: #a0a0a0; border-top: 0;`)}
`;

const ScrollThumb = styled.i`
  width: 13px;
  height: 191px;
  margin: 6px 0 auto;
  background: #c1c1c1;
`;

const DialogFoot = styled.div`
  display: flex;
  justify-content: center;
  flex: 1;
  padding-top: 10px;
  border-top: 1px solid #d0d0d0;
  background: #f0f0f0;
`;

const CloseButton = styled.button`
  width: 60px;
  height: 22px;
  padding: 0 0 1px;
  border: 1px solid #b2b2b2;
  border-radius: 3px;
  background: linear-gradient(#fff, #e8e8e8);
  color: #666;
  font: 10px ${GRID};
  font-stretch: condensed;
  letter-spacing: 0.3px;
`;

function PrintDialog() {
  return (
    <Dialog>
      <DialogHead>
        <span>Imprimir Documentos</span>
        <svg width="7" height="8" viewBox="0 0 7 8"><path d="M0.8 0.8L6.2 7.2M6.2 0.8L0.8 7.2" stroke="#8b949b" strokeWidth="1.9" /></svg>
      </DialogHead>
      <DialogBody>
        <DocList>
          {['DACTE', 'MDFE', 'CONTRATO DE FRETE', 'CARTA FRETE'].map((d) => (
            <DocRow key={d}><span>{d}</span><DownloadButton><FaDownload size={11} />Baixar</DownloadButton></DocRow>
          ))}
        </DocList>
        <ScrollTrack><ScrollArrow /><ScrollThumb /><ScrollArrow $down /></ScrollTrack>
      </DialogBody>
      <DialogFoot><CloseButton>Fechar</CloseButton></DialogFoot>
    </Dialog>
  );
}

export default function App() {
  return (
    <Page>
      <GlobalStyle />
      <Navbar>
        <LogoLink>
          <Logo width={65} height={20} color="#9a9ca2" road="#171f3c" />
          <NavLogoCaption>SOLUÇÕES EM TRANSPORTE</NavLogoCaption>
        </LogoLink>
        {navItems.map(([t, w]) => <NavLink key={t} $w={w}>{t}<Caret /></NavLink>)}
        <NavLink $w={181}>leticia.mussolin@transvale.com.br<Caret /></NavLink>
      </Navbar>
      <Heading>
        <Title>Emissão de CT-e</Title>
        <NextUpdate>
          <span>Próxima atualização em <b>03:01</b></span>
          <svg width="15" height="15" viewBox="0 0 15 15" fill="none" stroke="#0a0a0a" strokeWidth="1.7">
            <path d="M13 4.6A6.2 6.2 0 1 0 13.6 8.2" /><path d="M13.6 0.6V5H9.2" />
          </svg>
        </NextUpdate>
      </Heading>
      <Filters>
        {filters.map((f, i) => (
          <Field key={f.label} $drop={i > 7}>
            {f.label}
            <Control $small={f.select}><span>{f.value}</span>{f.select && <Chevron />}</Control>
          </Field>
        ))}
      </Filters>
      <SearchBar><SearchButton><FaSearch size={11} />Pesquisar</SearchButton></SearchBar>
      <ResultsTable />
      <Version>6.13.0.0</Version>
      <PopupWindow />
      <PrintDialog />
    </Page>
  );
}
